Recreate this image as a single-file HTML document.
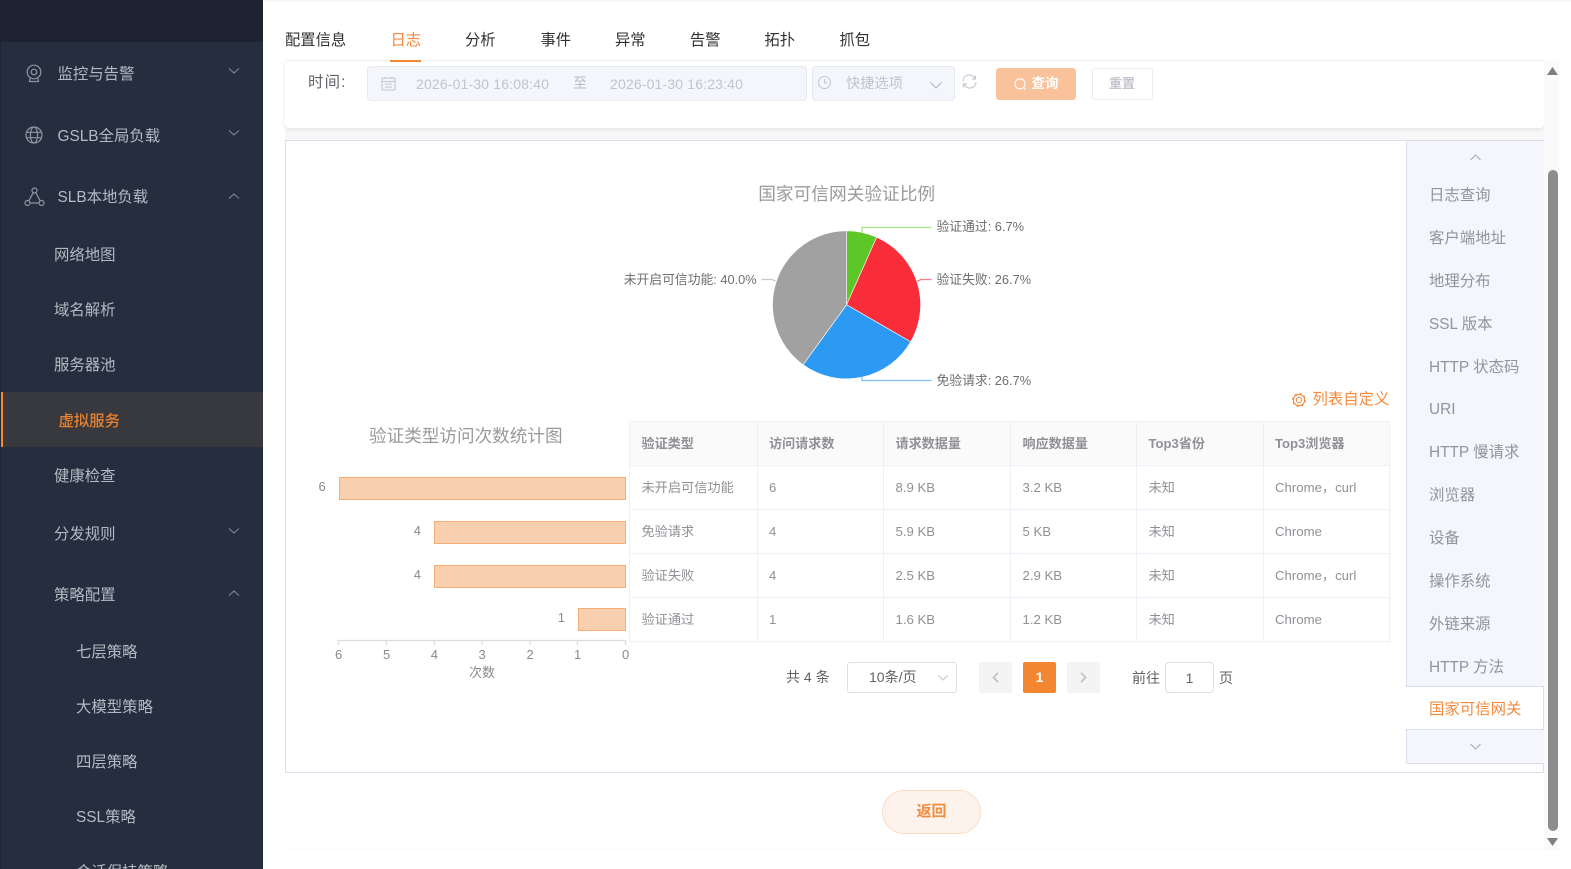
<!DOCTYPE html>
<html lang="zh"><head><meta charset="utf-8"><title>国家可信网关</title>
<style>
*{box-sizing:border-box}
html,body{margin:0;padding:0;width:1571px;height:869px;overflow:hidden;background:#fff;font-family:"Liberation Sans","Noto Sans CJK SC",sans-serif}
.a{position:absolute}
.t{position:absolute;white-space:nowrap;line-height:20px;height:20px}
#side{position:absolute;left:0;top:0;width:263px;height:869px;background:#252e3e;overflow:hidden}
#side .t{font-size:15.4px;color:#b4bac3}
.th{font-weight:bold;font-size:13.1px;color:#8f9196}
.td{font-size:13.2px;color:#8f9196}
.nav{font-size:15.4px;color:#919499}
.pl{font-size:12.8px;color:#6e6e6e}
.bl{font-size:13px;color:#8a8a8a}
.tab{font-size:15.3px;color:#303133;top:31px}
.h{position:absolute;background:#edf0f6;height:1px}
.v{position:absolute;background:#edf0f6;width:1px}
svg{position:absolute;overflow:visible}
</style></head><body>
<div id="side">
<div class="a" style="left:0;top:0;width:263px;height:42px;background:#1d2330"></div>
<div class="a" style="left:0;top:0;width:1px;height:869px;background:#1f2530"></div>
<div class="a" style="left:1px;top:392px;width:262px;height:55px;background:#38393e"></div>
<div class="a" style="left:1px;top:392px;width:2px;height:55px;background:#f58a32"></div>
<svg style="left:24px;top:63px" width="20" height="22" viewBox="0 0 20 22" fill="none" stroke="#8f96a2" stroke-width="1.2"><circle cx="10" cy="9" r="6.8"/><circle cx="10" cy="9" r="2.8"/><path d="M6 15.5 5.5 18.5H14.5L14 15.5"/></svg>
<svg style="left:25px;top:126px" width="18" height="18" viewBox="0 0 18 18" fill="none" stroke="#8f96a2" stroke-width="1.2"><circle cx="9" cy="9" r="8"/><ellipse cx="9" cy="9" rx="3.6" ry="8"/><path d="M1.5 6.3H16.5M1.5 11.7H16.5"/></svg>
<svg style="left:24px;top:187px" width="21" height="20" viewBox="0 0 21 20" fill="none" stroke="#8f96a2" stroke-width="1.2"><circle cx="10.5" cy="3.5" r="2.5"/><circle cx="3.5" cy="16" r="2.5"/><circle cx="17.5" cy="16" r="2.5"/><path d="M9.2 5.7 4.8 13.8M11.8 5.7 16.2 13.8M6 16H15"/></svg>
<div class="t" style="left:57.5px;top:64.5px">监控与告警</div>
<div class="t" style="left:57.5px;top:126.5px">GSLB全局负载</div>
<div class="t" style="left:57.5px;top:188px">SLB本地负载</div>
<div class="t" style="left:54px;top:245.5px">网络地图</div>
<div class="t" style="left:54px;top:300.5px">域名解析</div>
<div class="t" style="left:54px;top:355.5px">服务器池</div>
<div class="t" style="left:58.5px;top:411.5px;color:#e9802f;font-weight:500">虚拟服务</div>
<div class="t" style="left:54px;top:466.5px">健康检查</div>
<div class="t" style="left:54px;top:524.5px">分发规则</div>
<div class="t" style="left:54px;top:585.5px">策略配置</div>
<div class="t" style="left:76px;top:643px">七层策略</div>
<div class="t" style="left:76px;top:698px">大模型策略</div>
<div class="t" style="left:76px;top:753px">四层策略</div>
<div class="t" style="left:76px;top:808px">SSL策略</div>
<div class="t" style="left:76px;top:863px">会话保持策略</div>
<svg style="left:229px;top:68px" width="10" height="6" fill="none" stroke="#7f8794" stroke-width="1.1"><path d="M0 .5 5 5 10 .5"/></svg>
<svg style="left:229px;top:130px" width="10" height="6" fill="none" stroke="#7f8794" stroke-width="1.1"><path d="M0 .5 5 5 10 .5"/></svg>
<svg style="left:229px;top:193px" width="10" height="6" fill="none" stroke="#7f8794" stroke-width="1.1"><path d="M0 5.5 5 1 10 5.5"/></svg>
<svg style="left:229px;top:528px" width="10" height="6" fill="none" stroke="#7f8794" stroke-width="1.1"><path d="M0 .5 5 5 10 .5"/></svg>
<svg style="left:229px;top:590px" width="10" height="6" fill="none" stroke="#7f8794" stroke-width="1.1"><path d="M0 5.5 5 1 10 5.5"/></svg>
</div>

<!-- page bands -->
<div class="a" style="left:263px;top:0;width:1308px;height:2px;background:#f6f6f6"></div>
<div class="a" style="left:285px;top:60px;width:1259px;height:81px;background:#f7f7f7"></div>

<!-- tabs -->
<div class="t tab" style="left:285px">配置信息</div>
<div class="t tab" style="left:390.5px;color:#f58a3c">日志</div>
<div class="t tab" style="left:465px">分析</div>
<div class="t tab" style="left:540.5px">事件</div>
<div class="t tab" style="left:615px">异常</div>
<div class="t tab" style="left:690px">告警</div>
<div class="t tab" style="left:764.5px">拓扑</div>
<div class="t tab" style="left:839.5px">抓包</div>

<!-- filter card -->
<div class="a" style="left:285px;top:61px;width:1259px;height:67px;background:#fff;border-radius:0 0 4px 4px;box-shadow:0 1px 4px rgba(0,0,0,.1)"></div>
<div class="a" style="left:390px;top:60px;width:31px;height:2px;background:#f58a32"></div>
<div class="t" style="left:308px;top:72.5px;font-size:15.4px;letter-spacing:1.2px;color:#606266">时间:</div>
<div class="a" style="left:367px;top:66px;width:440px;height:35px;background:#f4f6fb;border:1px solid #e6e9f1;border-radius:4px"></div>
<svg style="left:381px;top:76px" width="15" height="15" fill="none" stroke="#c3c6cd" stroke-width="1.1"><rect x="1" y="2" width="13" height="12" rx="1"/><path d="M1 5.5H14M4 1V3M11 1V3M4 8H11M4 11H11"/></svg>
<div class="t" style="left:416px;top:73.5px;font-size:14px;letter-spacing:.16px;color:#c0c4cc">2026-01-30 16:08:40</div>
<div class="t" style="left:573px;top:73px;font-size:14px;color:#b9bdc5">至</div>
<div class="t" style="left:610px;top:73.5px;font-size:14px;letter-spacing:.16px;color:#c0c4cc">2026-01-30 16:23:40</div>
<div class="a" style="left:812px;top:66px;width:143px;height:35px;background:#f4f6fb;border:1px solid #e6e9f1;border-radius:4px"></div>
<svg style="left:817px;top:75px" width="15" height="15" fill="none" stroke="#c3c6cd" stroke-width="1.1"><circle cx="7.5" cy="7.5" r="6"/><path d="M7.5 4V8H10.5"/></svg>
<div class="t" style="left:846px;top:74px;font-size:14.2px;color:#c0c4cc">快捷选项</div>
<svg style="left:930px;top:82px" width="12" height="7" fill="none" stroke="#b4b8c0" stroke-width="1.1"><path d="M.5 .5 6 6 11.5 .5"/></svg>
<svg style="left:962px;top:74px" width="15" height="15" fill="none" stroke="#c5c9d2" stroke-width="1.2"><path d="M1 7A6.2 6.2 0 0 1 12 3.2L13.2 4.8M14 8A6.2 6.2 0 0 1 3 11.8L1.8 10.2M13.5 1.5V5H10M1.5 13.5V10H5"/></svg>
<div class="a" style="left:996px;top:68px;width:80px;height:31.5px;background:#f9c29a;border-radius:3px"></div>
<svg style="left:1014px;top:78px" width="13" height="13" fill="none" stroke="#fff" stroke-width="1.1"><circle cx="6" cy="5.8" r="5"/><path d="M9.5 9.5 11.5 11.5"/></svg>
<div class="t" style="left:1031.5px;top:73.5px;font-size:13.5px;color:#fff;font-weight:bold">查询</div>
<div class="a" style="left:1092px;top:68px;width:61px;height:31.5px;background:#fff;border:1px solid #e9ecf4;border-radius:3px"></div>
<div class="t" style="left:1109px;top:73.5px;font-size:13px;color:#c2c5cc;font-weight:bold">重置</div>

<!-- main card -->
<div class="a" style="left:285px;top:140px;width:1259px;height:633px;background:#fff;border:1px solid #dcdfeb"></div>
<!-- right nav -->
<div class="a" style="left:1406px;top:141px;width:138px;height:546px;background:#f4f6fb;border-left:1px solid #dcdfeb;border-bottom:1px solid #d5dbe8"></div>
<div class="a" style="left:1406px;top:729px;width:138px;height:35px;background:#f4f6fb;border:1px solid #dcdfeb;border-right:0"></div>
<svg style="left:1470px;top:154px" width="11" height="7" fill="none" stroke="#a3a8b3" stroke-width="1"><path d="M.5 6 5.5 1 10.5 6"/></svg>
<svg style="left:1470px;top:743px" width="11" height="7" fill="none" stroke="#a3a8b3" stroke-width="1"><path d="M.5 1 5.5 6 10.5 1"/></svg>
<div class="t nav" style="left:1429px;top:186px">日志查询</div>
<div class="t nav" style="left:1429px;top:229px">客户端地址</div>
<div class="t nav" style="left:1429px;top:272px">地理分布</div>
<div class="t nav" style="left:1429px;top:315px">SSL 版本</div>
<div class="t nav" style="left:1429px;top:357.5px">HTTP 状态码</div>
<div class="t nav" style="left:1429px;top:400px">URI</div>
<div class="t nav" style="left:1429px;top:443px">HTTP 慢请求</div>
<div class="t nav" style="left:1429px;top:486px">浏览器</div>
<div class="t nav" style="left:1429px;top:529px">设备</div>
<div class="t nav" style="left:1429px;top:572px">操作系统</div>
<div class="t nav" style="left:1429px;top:615px">外链来源</div>
<div class="t nav" style="left:1429px;top:658px">HTTP 方法</div>
<div class="t nav" style="left:1429px;top:699.5px;color:#f58a3c">国家可信网关</div>

<!-- pie -->
<div class="t" style="left:671.7px;top:184px;width:350px;text-align:center;font-size:17.7px;color:#9a9a9a">国家可信网关验证比例</div>
<svg style="left:0;top:0" width="1571" height="869">
<path d="M846.6 304.8V230.8A74 74 0 0 1 876.7 237.2Z" fill="#5cc726" stroke="#fff" stroke-width=".6"/>
<path d="M846.6 304.8 876.7 237.2A74 74 0 0 1 910.7 341.8Z" fill="#f92c39" stroke="#fff" stroke-width=".6"/>
<path d="M846.6 304.8 910.7 341.8A74 74 0 0 1 803.1 364.7Z" fill="#2c9af2" stroke="#fff" stroke-width=".6"/>
<path d="M846.6 304.8 803.1 364.7A74 74 0 0 1 846.6 230.8Z" fill="#a1a1a1" stroke="#fff" stroke-width=".6"/>
<g fill="none" stroke-width="1.3">
<path d="M862 232.5V227.5H931.5" stroke="#a6e38a"/>
<path d="M917 281.5 921 279.5H931.5" stroke="#fb7c86"/>
<path d="M862 377V380.5H931.5" stroke="#7cc0f7"/>
<path d="M761.5 279.5H772L775.5 281" stroke="#c8c8c8"/>
</g>
</svg>
<div class="t pl" style="left:936.5px;top:216.5px">验证通过: 6.7%</div>
<div class="t pl" style="left:936.5px;top:269.5px">验证失败: 26.7%</div>
<div class="t pl" style="left:936.5px;top:370.5px">免验请求: 26.7%</div>
<div class="t pl" style="left:556.7px;top:269.5px;width:200px;text-align:right">未开启可信功能: 40.0%</div>

<!-- custom list -->
<svg style="left:1292px;top:392.5px" width="14" height="14" viewBox="0 0 14 14" fill="none" stroke="#f58a3c"><circle cx="7" cy="7" r="5.6" stroke-width="1"/><circle cx="7" cy="7" r="6.1" stroke-width="1.6" stroke-dasharray="2.4 2.4"/><circle cx="7" cy="7" r="2.7" stroke-width="1"/></svg>
<div class="t" style="left:1312.5px;top:390px;font-size:15.4px;color:#f58a3c">列表自定义</div>

<!-- bar chart -->
<div class="t" style="left:369px;top:425.5px;font-size:17.6px;color:#9a9a9a">验证类型访问次数统计图</div>
<div class="a" style="left:338.5px;top:476.5px;width:287.5px;height:23px;background:#f8cfaf;border:1px solid #f6ac75"></div>
<div class="a" style="left:434px;top:520.5px;width:192px;height:23px;background:#f8cfaf;border:1px solid #f6ac75"></div>
<div class="a" style="left:434px;top:564.5px;width:192px;height:23px;background:#f8cfaf;border:1px solid #f6ac75"></div>
<div class="a" style="left:577.5px;top:608px;width:48.5px;height:23px;background:#f8cfaf;border:1px solid #f6ac75"></div>
<div class="t bl" style="left:318.5px;top:477px">6</div>
<div class="t bl" style="left:413.8px;top:521px">4</div>
<div class="t bl" style="left:413.8px;top:565px">4</div>
<div class="t bl" style="left:557.8px;top:607.5px">1</div>
<svg style="left:0;top:0" width="1571" height="869" fill="none" stroke="#dcdcdc" stroke-width="1.3"><path d="M338.5 645V640.5H625.5V645M386.5 640.5V645M434.5 640.5V645M482 640.5V645M530 640.5V645M577.5 640.5V645"/></svg>
<div class="t bl" style="left:335px;top:644.5px">6</div>
<div class="t bl" style="left:383px;top:644.5px">5</div>
<div class="t bl" style="left:430.8px;top:644.5px">4</div>
<div class="t bl" style="left:478.5px;top:644.5px">3</div>
<div class="t bl" style="left:526.5px;top:644.5px">2</div>
<div class="t bl" style="left:574px;top:644.5px">1</div>
<div class="t bl" style="left:622px;top:644.5px">0</div>
<div class="t bl" style="left:469px;top:662.5px">次数</div>

<!-- table -->
<div class="a" style="left:629px;top:421.5px;width:761px;height:44px;background:#fafafa"></div>
<div class="h" style="left:629px;top:421px;width:761px"></div>
<div class="h" style="left:629px;top:465px;width:761px"></div>
<div class="h" style="left:629px;top:509px;width:761px"></div>
<div class="h" style="left:629px;top:553px;width:761px"></div>
<div class="h" style="left:629px;top:597px;width:761px"></div>
<div class="h" style="left:629px;top:641px;width:761px"></div>
<div class="v" style="left:629px;top:421px;height:221px"></div>
<div class="v" style="left:757px;top:421px;height:221px"></div>
<div class="v" style="left:883px;top:421px;height:221px"></div>
<div class="v" style="left:1010px;top:421px;height:221px"></div>
<div class="v" style="left:1136px;top:421px;height:221px"></div>
<div class="v" style="left:1263px;top:421px;height:221px"></div>
<div class="v" style="left:1389px;top:421px;height:221px"></div>
<div class="t th" style="left:641.5px;top:433.5px">验证类型</div>
<div class="t th" style="left:769px;top:433.5px">访问请求数</div>
<div class="t th" style="left:895.5px;top:433.5px">请求数据量</div>
<div class="t th" style="left:1022.5px;top:433.5px">响应数据量</div>
<div class="t th" style="left:1148.5px;top:433.5px">Top3省份</div>
<div class="t th" style="left:1275px;top:433.5px">Top3浏览器</div>
<div class="t td" style="left:641.5px;top:478px">未开启可信功能</div><div class="t td" style="left:769px;top:478px">6</div><div class="t td" style="left:895.5px;top:478px">8.9 KB</div><div class="t td" style="left:1022.5px;top:478px">3.2 KB</div><div class="t td" style="left:1148.5px;top:478px">未知</div><div class="t td" style="left:1275px;top:478px">Chrome，curl</div>
<div class="t td" style="left:641.5px;top:522px">免验请求</div><div class="t td" style="left:769px;top:522px">4</div><div class="t td" style="left:895.5px;top:522px">5.9 KB</div><div class="t td" style="left:1022.5px;top:522px">5 KB</div><div class="t td" style="left:1148.5px;top:522px">未知</div><div class="t td" style="left:1275px;top:522px">Chrome</div>
<div class="t td" style="left:641.5px;top:566px">验证失败</div><div class="t td" style="left:769px;top:566px">4</div><div class="t td" style="left:895.5px;top:566px">2.5 KB</div><div class="t td" style="left:1022.5px;top:566px">2.9 KB</div><div class="t td" style="left:1148.5px;top:566px">未知</div><div class="t td" style="left:1275px;top:566px">Chrome，curl</div>
<div class="t td" style="left:641.5px;top:610px">验证通过</div><div class="t td" style="left:769px;top:610px">1</div><div class="t td" style="left:895.5px;top:610px">1.6 KB</div><div class="t td" style="left:1022.5px;top:610px">1.2 KB</div><div class="t td" style="left:1148.5px;top:610px">未知</div><div class="t td" style="left:1275px;top:610px">Chrome</div>

<!-- pagination -->
<div class="t" style="left:786px;top:667px;font-size:14px;color:#606266">共 4 条</div>
<div class="a" style="left:847px;top:662px;width:110px;height:31px;background:#fff;border:1px solid #dcdfe6;border-radius:3px"></div>
<div class="t" style="left:869px;top:667px;font-size:14px;color:#606266">10条/页</div>
<svg style="left:938px;top:675px" width="10" height="6" fill="none" stroke="#c0c4cc" stroke-width="1"><path d="M.5 .5 5 5 9.5 .5"/></svg>
<div class="a" style="left:979px;top:662px;width:33px;height:31px;background:#f4f4f5;border-radius:2px"></div>
<svg style="left:992px;top:672px" width="7" height="11" fill="none" stroke="#bfc3cb" stroke-width="1.8"><path d="M6 .8 1.5 5.5 6 10.2"/></svg>
<div class="a" style="left:1023px;top:662px;width:33px;height:31px;background:#f28631;border-radius:2px"></div>
<div class="t" style="left:1023px;top:667px;width:33px;text-align:center;font-size:14px;font-weight:bold;color:#fff">1</div>
<div class="a" style="left:1067px;top:662px;width:33px;height:31px;background:#f4f4f5;border-radius:2px"></div>
<svg style="left:1080px;top:672px" width="7" height="11" fill="none" stroke="#bfc3cb" stroke-width="1.8"><path d="M1 .8 5.5 5.5 1 10.2"/></svg>
<div class="t" style="left:1132px;top:667.5px;font-size:14px;color:#606266">前往</div>
<div class="a" style="left:1165px;top:662px;width:49px;height:31px;background:#fff;border:1px solid #dcdfe6;border-radius:4px"></div>
<div class="t" style="left:1165px;top:667.5px;width:49px;text-align:center;font-size:14px;color:#606266">1</div>
<div class="t" style="left:1219px;top:667.5px;font-size:14px;color:#606266">页</div>

<!-- bottom card -->
<div class="a" style="left:285px;top:849px;width:1259px;height:1px;background:#f9f9f9"></div>
<div class="a" style="left:882px;top:790px;width:99px;height:44px;background:#fdf3ec;border:1px solid #fbdcc4;border-radius:22px"></div>
<div class="t" style="left:882px;top:802px;width:99px;text-align:center;font-size:15px;font-weight:bold;color:#f28c3e">返回</div>

<!-- scrollbar -->
<div class="a" style="left:1544px;top:61px;width:15px;height:789px;background:#fafafa"></div>
<div class="a" style="left:1547.5px;top:170px;width:10px;height:661px;background:#8c8c8c;border-radius:5px"></div>
<svg style="left:1547px;top:67px" width="11" height="9"><path d="M5.5 0 11 8H0Z" fill="#7e7e7e"/></svg>
<svg style="left:1547px;top:838px" width="11" height="9"><path d="M0 0H11L5.5 8Z" fill="#7e7e7e"/></svg>
</body></html>
